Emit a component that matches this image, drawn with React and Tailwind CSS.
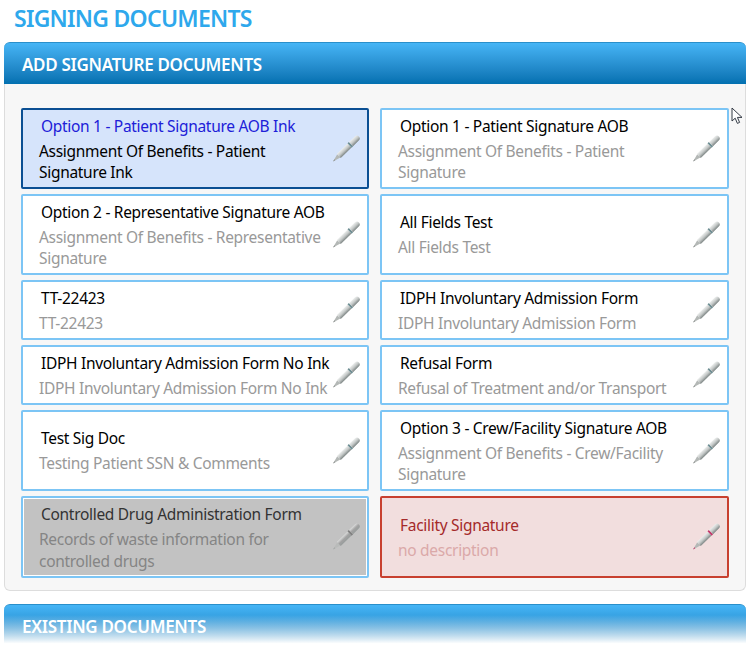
import React from "react";

const docs = [
  { title: "Option 1 - Patient Signature AOB Ink", desc: "Assignment Of Benefits - Patient Signature Ink", type: "selected" },
  { title: "Option 1 - Patient Signature AOB", desc: "Assignment Of Benefits - Patient Signature" },
  { title: "Option 2 - Representative Signature AOB", desc: "Assignment Of Benefits - Representative Signature" },
  { title: "All Fields Test", desc: "All Fields Test" },
  { title: "TT-22423", desc: "TT-22423" },
  { title: "IDPH Involuntary Admission Form", desc: "IDPH Involuntary Admission Form" },
  { title: "IDPH Involuntary Admission Form No Ink", desc: "IDPH Involuntary Admission Form No Ink" },
  { title: "Refusal Form", desc: "Refusal of Treatment and/or Transport" },
  { title: "Test Sig Doc", desc: "Testing Patient SSN & Comments" },
  { title: "Option 3 - Crew/Facility Signature AOB", desc: "Assignment Of Benefits - Crew/Facility Signature" },
  { title: "Controlled Drug Administration Form", desc: "Records of waste information for controlled drugs", type: "disabled" },
  { title: "Facility Signature", desc: "no description", type: "required" },
];

const cardStyles = {
  normal: "border-2 border-[#7cc5f5] bg-white",
  selected: "border-2 border-[#0b4f93] bg-[#d6e4fb]",
  disabled: "border-2 border-[#7cc5f5] bg-[#c2c2c2] shadow-[inset_0_0_0_1px_#ffffff]",
  required: "border-2 border-[#c8402f] bg-[#f2dede]",
};
const titleStyles = {
  normal: "text-black",
  selected: "text-[#2020d8]",
  disabled: "text-[#333333]",
  required: "text-[#a52a2a]",
};
const descStyles = {
  normal: "text-[#999999]",
  selected: "text-black",
  disabled: "text-[#858585]",
  required: "text-[#dba9a9]",
};

const Pen = ({ band = "#6f8f94", tint = "#c4c8c7", edge = "#7c8483", className = "" }) => (
  <svg width="28" height="28" viewBox="0 0 28 28" className={className}>
    <defs>
      <linearGradient id={"pen" + band.slice(1)} x1="0" y1="0" x2="0" y2="1">
        <stop offset="0" stopColor="#eceeed" />
        <stop offset="0.5" stopColor={tint} />
        <stop offset="1" stopColor={edge} />
      </linearGradient>
    </defs>
    <g transform="translate(14 14) rotate(-44)">
      <path d="M-18 0 L-10 -2.2 L-10 2.2 Z" fill="#b4b8b6" />
      <path d="M-18 0 L-15.5 -0.7 L-15.5 0.7 Z" fill={band === "#c2386a" ? band : "#8d9290"} />
      <rect x="-10" y="-2.8" width="15" height="5.6" fill={"url(#pen" + band.slice(1) + ")"} />
      <rect x="5" y="-3" width="2" height="6" fill={band} />
      <path d="M7 -2.8 H15 Q18 -2.8 18 0 Q18 2.8 15 2.8 H7 Z" fill={"url(#pen" + band.slice(1) + ")"} />
    </g>
  </svg>
);

const DocCard = ({ title, desc, type = "normal" }) => (
  <div className={`relative flex flex-col justify-center rounded-[2px] pl-4 pr-[38px] pt-[4px] pb-[2px] ${cardStyles[type]}`}>
    <div className={`pl-[2px] leading-[21px] mb-[4px] whitespace-nowrap ${titleStyles[type]}`}>{title}</div>
    <div className={`leading-[21.5px] ${descStyles[type]}`}>{desc}</div>
    <Pen
      className={`absolute right-[7px] top-1/2 -translate-y-1/2 ${type === "disabled" ? "opacity-60" : ""}`}
      band={type === "required" ? "#c2386a" : type === "disabled" ? "#555555" : "#6f8f94"}
      tint={type === "disabled" ? "#8f8f8f" : "#c4c8c7"}
    />
  </div>
);

const PanelHeader = ({ children }) => (
  <div className="flex h-[42px] items-center rounded-t-[6px] border-t border-[#2a8fca] bg-gradient-to-b from-[#46b5f6] to-[#0270b0] pl-[18px] pt-[2px] text-[17px] tracking-[-0.3px] font-semibold text-white">
    {children}
  </div>
);

export default function App() {
  return (
    <div className="relative h-[657px] w-[750px] overflow-hidden bg-white px-1 font-['Noto_Sans',sans-serif] text-[15.5px] tracking-[-0.3px]">
      <h1 className="h-[42px] pl-[10px] pt-[2px] text-[23px] tracking-[-0.75px] leading-[32px] font-semibold text-[#2ea8ec]">SIGNING DOCUMENTS</h1>
      <PanelHeader>ADD SIGNATURE DOCUMENTS</PanelHeader>
      <div className="h-[507px] rounded-b-[6px] border border-t-0 border-[#dddddd] bg-[#f7f7f7] pl-4 pr-4 pt-6">
        <div className="grid grid-cols-[348px_349px] grid-rows-[81px_81px_60px_60px_81px_82px] gap-x-[11px] gap-y-[5px]">
          {docs.map((d) => (
            <DocCard key={d.title} {...d} />
          ))}
        </div>
      </div>
      <div className="mt-[13px]">
        <PanelHeader>EXISTING DOCUMENTS</PanelHeader>
      </div>
      <div className="absolute bottom-0 left-0 h-[42px] w-full bg-gradient-to-b from-white/0 to-white to-[68%]" />
      <svg className="absolute left-[731px] top-[107px]" width="14" height="18" viewBox="0 0 14 18">
        <path d="M1 1 V14 L4.2 11.2 L6.4 16.4 L8.6 15.4 L6.4 10.4 H11 Z" fill="#fff" stroke="#333a45" strokeWidth="1" />
      </svg>
    </div>
  );
}
